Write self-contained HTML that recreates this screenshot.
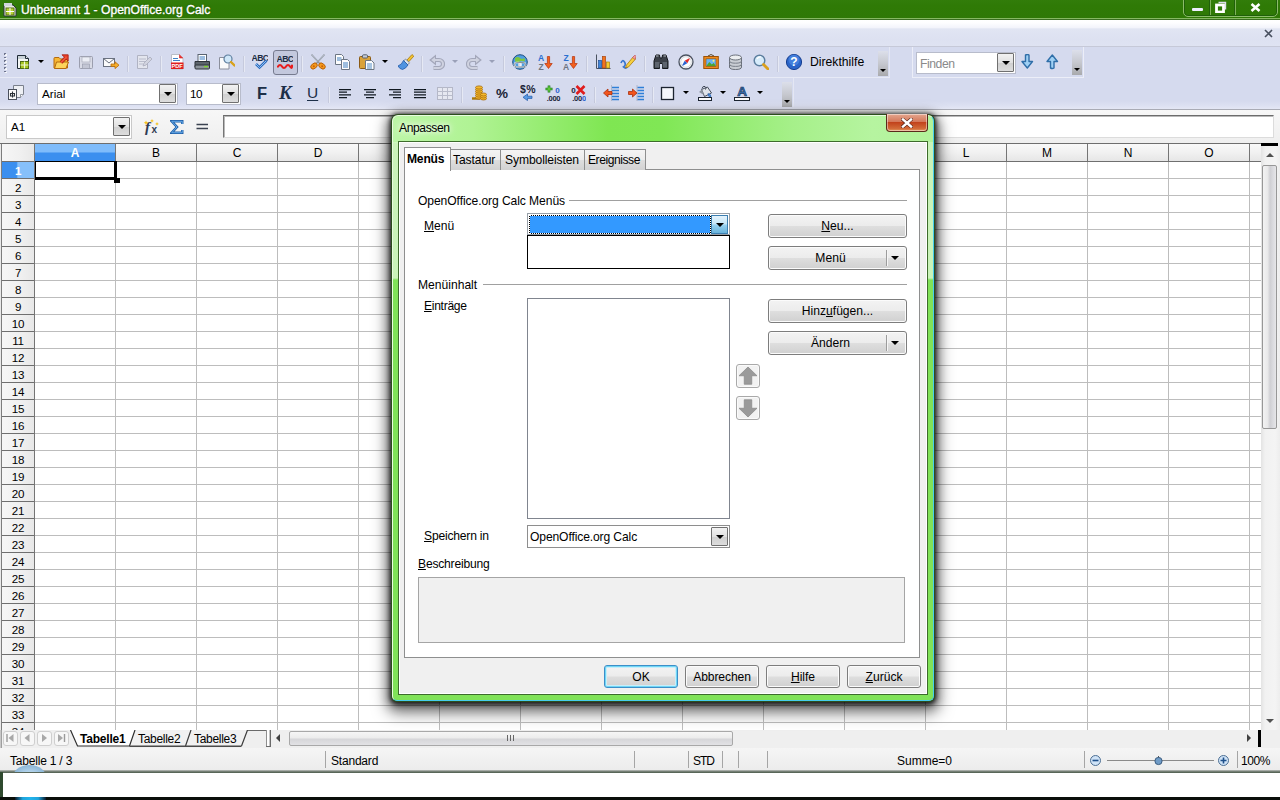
<!DOCTYPE html>
<html lang="de">
<head>
<meta charset="utf-8">
<title>Unbenannt 1 - OpenOffice.org Calc</title>
<style>
*{box-sizing:border-box;margin:0;padding:0}
html,body{width:1280px;height:800px;overflow:hidden;background:#fff}
body{position:relative;font-family:"Liberation Sans",sans-serif;font-size:12px;color:#000;line-height:1}
.a{position:absolute}
.t{position:absolute;white-space:nowrap;line-height:14px;height:14px}
u{text-decoration:underline;text-underline-offset:1px}
/* main window */
#title{left:0;top:0;width:1280px;height:20px;background:linear-gradient(#327d0a,#2f7a06 30%,#2e7805)}
#title .t{color:#fff;font-size:12.1px;left:21px;top:3px;-webkit-text-stroke:.35px #fff;text-shadow:0 0 2px #1c4a08}
#menubar{left:0;top:20px;width:1280px;height:27px;background:linear-gradient(#fff 0,#fdfdff 3px,#f3f4fb 7.500px,#e1e5f3 9px,#dde1f1 19px,#dfe3f2 26px)}
#tb1{left:0;top:47px;width:1280px;height:31px;background:#d5daee}
#tb2{left:0;top:78px;width:1280px;height:32px;background:linear-gradient(#d5daee 0,#d5daee 23px,#dde1f2 28px,#e4e7f5 31px)}
#fbar{left:0;top:110px;width:1280px;height:33px;background:linear-gradient(#f7f7f7,#efefef)}
.sep{position:absolute;width:1px;height:16px;background:#c6cadd}
.combo{position:absolute;background:#fff;border:1px solid #b8bccb}
.cbtn{position:absolute;width:17px;height:19px;background:linear-gradient(#f2f2f2,#e1e1e1 50%,#cfcfcf 51%,#ddd);border:1px solid #707070;border-radius:1px}
.cbtn:after{content:"";position:absolute;left:4px;top:7px;border:4px solid transparent;border-top:4px solid #000;border-bottom:0}
.ovf{position:absolute;width:10px;background:linear-gradient(#dcdfea,#c6c8cf 50%,#a9aaad)}
.ovf:after{content:"";position:absolute;left:2px;bottom:4px;border:3px solid transparent;border-top:3px solid #000;border-bottom:0}
.dd{position:absolute;border:3px solid transparent;border-top:3px solid #000;border-bottom:0;width:0;height:0}
.ch{top:3px;width:80px;text-align:center;font-size:12px}
.rh{left:2px;width:32px;text-align:center;font-size:11.6px;letter-spacing:-0.2px;margin-top:1px}
</style>
</head>
<body>
<!-- ===== main window title bar ===== -->
<div id="title" class="a">
  <svg class="a" style="left:3px;top:2px" width="15" height="15" viewBox="0 0 15 15"><path d="M1 3h9l3 3v8H1z" fill="#e8ece0" stroke="#2a3340"/><rect x="3" y="6" width="8" height="7" fill="#b6d332" stroke="#55701a"/><path d="M3 9.5h8M7 6v7" stroke="#fff"/><path d="M1 1h8v3H1z" fill="#cfd6dc"/></svg>
  <span class="t">Unbenannt 1 - OpenOffice.org Calc</span>
  <div class="a" style="left:1183px;top:-5px;width:95px;height:22px;border:1px solid #8cbc6a;border-radius:5px;box-shadow:inset 0 0 0 1px #20600a"></div>
  <div class="a" style="left:1209px;top:0;width:2px;height:15px;background:linear-gradient(90deg,#20600a 50%,#7fb25c 50%)"></div>
  <div class="a" style="left:1234px;top:0;width:2px;height:15px;background:linear-gradient(90deg,#20600a 50%,#7fb25c 50%)"></div>
  <div class="a" style="left:1192px;top:8px;width:11px;height:3px;background:#eef;border-radius:1px"></div>
  <svg class="a" style="left:1215px;top:1px" width="12" height="12" viewBox="0 0 12 12"><path d="M3.5 1.5h7v7" fill="none" stroke="#dde" stroke-width="1.4"/><rect x="1.500" y="4" width="7" height="7" fill="none" stroke="#fff" stroke-width="2.800"/></svg>
  <svg class="a" style="left:1250px;top:3px" width="11" height="9" viewBox="0 0 11 9"><path d="M1.5 1l8 7M9.5 1l-8 7" stroke="#fff" stroke-width="2.6"/></svg>
</div>
<div class="a" style="left:0;top:18px;width:1280px;height:1px;background:#86b862"></div>
<div class="a" style="left:0;top:19px;width:1280px;height:1px;background:#3b6f22"></div>
<!-- ===== menu bar (empty) ===== -->
<div id="menubar" class="a">
  <svg class="a" style="left:1264px;top:9px" width="9" height="9" viewBox="0 0 9 9"><path d="M1 1l7 7M8 1l-7 7" stroke="#48505f" stroke-width="1.6"/></svg>
</div>
<div class="a" style="left:0;top:46px;width:1280px;height:1px;background:#c6c9d8"></div>
<!-- ===== toolbars ===== -->
<div id="tb1" class="a">
  <div class="a" style="left:4px;top:6px;width:2px;height:19px;background:repeating-linear-gradient(#6d738c 0 1.500px,transparent 1.500px 3.600px)"></div><div class="a" style="left:5px;top:7px;width:2px;height:19px;background:repeating-linear-gradient(rgba(255,255,255,.8) 0 1.500px,transparent 1.500px 3.600px)"></div>
  <svg class="a" style="left:15px;top:7px" width="16" height="16" viewBox="0 0 16 16"><path d="M2.500 1.500h8l3 3v10h-11z" fill="#f4f6f4" stroke="#1f2a36"/><path d="M3 2h7v3H3z" fill="#c9d2d8"/><path d="M10.500 1.500v3h3" fill="#dfe5e8" stroke="#1f2a36"/><rect x="5.500" y="7.500" width="8" height="7" fill="#a7c520" stroke="#4f6d10"/><path d="M5.500 11h8M9.500 7.500v7" stroke="#f2f7d8" stroke-width="1.200"/></svg>
  <div class="dd" style="left:38px;top:13px;border-top-color:#000"></div>
  <svg class="a" style="left:53px;top:7px" width="16" height="16" viewBox="0 0 16 16"><path d="M1 4.500q0-1 1-1h4l1.500 1.500h6q1 0 1 1v8h-13.500z" fill="#f7b733" stroke="#b4690e"/><path d="M1.500 14.500l2-6.500h12l-2.500 6.500z" fill="#fdd45c" stroke="#b4690e"/><path d="M8 8.500l5.500-5.500" fill="none" stroke="#a81c0c" stroke-width="3.400"/><path d="M9 .8h6.200v6.200z" fill="#e8402a" stroke="#a81c0c" stroke-width=".8"/><path d="M8 8.500l5.500-5.500" fill="none" stroke="#f0563a" stroke-width="1.800"/></svg>
  <svg class="a" style="left:78px;top:7px" width="16" height="16" viewBox="0 0 16 16"><rect x="1.500" y="2.500" width="13" height="12" rx="1" fill="#d9dbe6" stroke="#9b9eae"/><rect x="4" y="3" width="8" height="5" fill="#eceef5" stroke="#a8abb9" stroke-width=".7"/><rect x="4.500" y="10" width="7" height="4.500" fill="#c3c6d4" stroke="#9b9eae" stroke-width=".7"/></svg>
  <svg class="a" style="left:103px;top:7px" width="16" height="16" viewBox="0 0 16 16"><rect x=".5" y="4.500" width="11" height="8" fill="#fbfbfb" stroke="#6b7280"/><path d="M.5 4.500l5.500 4.500 5.500-4.500" fill="none" stroke="#6b7280"/><path d="M8 10h4v-2.200l4 3.400-4 3.400v-2.200h-4z" fill="#f8b02c" stroke="#b86a08" stroke-width=".8"/></svg>
  <div class="sep" style="left:127px;top:9px"></div><div class="sep" style="left:128px;top:9px;background:#e6e9f4"></div>
  <svg class="a" style="left:136px;top:7px" width="16" height="16" viewBox="0 0 16 16"><path d="M1.500 1.500h10v13h-10z" fill="#e3e5ee" stroke="#b0b3c3"/><path d="M3 5h7M3 7.500h7M3 10h4" stroke="#b9bccb"/><path d="M7 12l1-3 6-6 2 2-6 6z" fill="#d2d4e0" stroke="#a9acbc" stroke-width=".8"/></svg>
  <div class="sep" style="left:160px;top:9px"></div><div class="sep" style="left:161px;top:9px;background:#e6e9f4"></div>
  <svg class="a" style="left:170px;top:7px" width="16" height="16" viewBox="0 0 16 16"><path d="M1.500 .5h8l3.500 3.500v11h-11.500z" fill="#fff" stroke="#b9bdc7"/><path d="M9.500 .5v3.500h3.500" fill="#e33" stroke="#c22" stroke-width=".6"/><path d="M3 4.500h5M3 6.500h7" stroke="#3f82c8" stroke-width="1.200"/><rect x="1" y="8.500" width="12.500" height="6.500" fill="#e01e1e"/><text x="7.200" y="14" font-size="5.600" font-weight="bold" fill="#fff" text-anchor="middle" font-family="Liberation Sans, sans-serif">PDF</text></svg>
  <svg class="a" style="left:194px;top:7px" width="16" height="16" viewBox="0 0 16 16"><rect x="4" y=".5" width="8.500" height="7" fill="#fff" stroke="#5a6472"/><path d="M5.500 3h5.500M5.500 5h5.500" stroke="#3d7fc4" stroke-width="1.100"/><path d="M1 7.500h14.500v5.500h-14.500z" fill="#5d646c" stroke="#2d3238"/><rect x="1" y="11" width="14.500" height="4" rx="1" fill="#8b9299" stroke="#2d3238"/><rect x="10" y="11.800" width="4" height="1.500" fill="#7fd12f"/></svg>
  <svg class="a" style="left:219px;top:7px" width="16" height="16" viewBox="0 0 16 16"><path d="M.5 3.500h7l2.500 2.500v9h-9.500z" fill="#fbfbfb" stroke="#8b8f9c"/><circle cx="9" cy="5" r="4" fill="#cfe7f9" stroke="#5f7f9f" stroke-width="1.200"/><path d="M12 8l3.500 3.500" stroke="#d9a21c" stroke-width="2.400" stroke-linecap="round"/></svg>
  <div class="sep" style="left:243px;top:9px"></div><div class="sep" style="left:244px;top:9px;background:#e6e9f4"></div>
  <svg class="a" style="left:252px;top:7px" width="16" height="16" viewBox="0 0 16 16"><text x="8" y="6.500" font-size="8.600" font-weight="bold" fill="#1a2b44" text-anchor="middle" letter-spacing="-.5" font-family="Liberation Sans, sans-serif">ABC</text><path d="M4 10l3.500 3.500 7-7" fill="none" stroke="#2a6cc0" stroke-width="2.600"/><path d="M4 10l3.500 3.500 7-7" fill="none" stroke="#9cc6f2" stroke-width=".9"/></svg>
  <div class="a" style="left:273px;top:3px;width:25px;height:25px;border:1px solid #767b8f;border-radius:3px;background:#c3c8dd"></div>
  <svg class="a" style="left:277px;top:7px" width="16" height="16" viewBox="0 0 16 16"><text x="8" y="8" font-size="8.600" font-weight="bold" fill="#1a2b44" text-anchor="middle" letter-spacing="-.5" font-family="Liberation Sans, sans-serif">ABC</text><path d="M1 12.500q2-3 4 0t4 0 4 0 2-1" fill="none" stroke="#e81c1c" stroke-width="2.200" stroke-linecap="round"/></svg>
  <div class="sep" style="left:301px;top:9px"></div><div class="sep" style="left:302px;top:9px;background:#e6e9f4"></div>
  <svg class="a" style="left:310px;top:7px" width="16" height="16" viewBox="0 0 16 16"><path d="M1.500 .5l10 11M14.500 .5l-10 11" stroke="#8d95a2" stroke-width="1.500"/><path d="M1.500 .5l6 6.800M14.500 .5l-6 6.800" stroke="#c9ced6" stroke-width=".7"/><ellipse cx="4" cy="12" rx="3.600" ry="2.500" transform="rotate(-38 4 12)" fill="#f59a1c" stroke="#b8600a" stroke-width=".9"/><ellipse cx="12" cy="12" rx="3.600" ry="2.500" transform="rotate(38 12 12)" fill="#f59a1c" stroke="#b8600a" stroke-width=".9"/><circle cx="3.800" cy="12.300" r="1" fill="#c8600c"/><circle cx="12.200" cy="12.300" r="1" fill="#c8600c"/></svg>
  <svg class="a" style="left:335px;top:7px" width="16" height="16" viewBox="0 0 16 16"><path d="M.5 .5h6l2 2v8h-8z" fill="#fdfdfd" stroke="#6c7684"/><path d="M2 4h4.500M2 6h4.500" stroke="#3f7fc0"/><path d="M6.500 5.500h6l2 2v8h-8z" fill="#fdfdfd" stroke="#6c7684"/><path d="M8 9h5M8 11h5M8 13h5" stroke="#3f7fc0"/></svg>
  <svg class="a" style="left:359px;top:7px" width="16" height="16" viewBox="0 0 16 16"><rect x=".5" y="2.500" width="11" height="12" rx="1" fill="#d9a23a" stroke="#8b5a14"/><rect x="3.500" y=".8" width="5" height="3.200" rx="1" fill="#c8ccd2" stroke="#596170"/><path d="M6.500 6.500h6l2.500 2.500v6.500h-8.500z" fill="#fdfdfd" stroke="#6c7684"/><path d="M8 10h5M8 12h5M8 14h5" stroke="#3f7fc0" stroke-width=".9"/></svg>
  <div class="dd" style="left:382px;top:13px;border-top-color:#000"></div>
  <svg class="a" style="left:398px;top:7px" width="16" height="16" viewBox="0 0 16 16"><path d="M9 6l5-5.500 1.800 1.700-5 5.500z" fill="#f2c230" stroke="#a9780c" stroke-width=".8"/><path d="M7.500 5l4 3.800-1.800 2-4-3.800z" fill="#dfe4ea" stroke="#6c7684" stroke-width=".8"/><path d="M5.500 6.500l4.500 4.500q-2 3.500-5.500 4.500-3-.5-4.500-3.500 4-1.500 5.500-5.500z" fill="#4f93e0" stroke="#1f58a8" stroke-width=".8"/></svg>
  <div class="sep" style="left:421px;top:9px"></div><div class="sep" style="left:422px;top:9px;background:#e6e9f4"></div>
  <svg class="a" style="left:429px;top:7px" width="16" height="16" viewBox="0 0 16 16"><path d="M5 6h5a4 4 0 010 8h-5.500" fill="none" stroke="#a3a7ba" stroke-width="4.200"/><path d="M7 .5v11l-6.800-5.500z" fill="#a3a7ba"/><path d="M5 6h5a4 4 0 010 8h-5.500" fill="none" stroke="#cfd2e0" stroke-width="2"/><path d="M6 3v6l-3.800-3z" fill="#cfd2e0"/></svg>
  <div class="dd" style="left:452px;top:13px;border-top-color:#9aa0b8"></div>
  <svg class="a" style="left:466px;top:7px" width="16" height="16" viewBox="0 0 16 16"><path d="M11 6h-5a4 4 0 000 8h5.500" fill="none" stroke="#a3a7ba" stroke-width="4.200"/><path d="M9 .5v11l6.800-5.500z" fill="#a3a7ba"/><path d="M11 6h-5a4 4 0 000 8h5.500" fill="none" stroke="#cfd2e0" stroke-width="2"/><path d="M10 3v6l3.800-3z" fill="#cfd2e0"/></svg>
  <div class="dd" style="left:489px;top:13px;border-top-color:#9aa0b8"></div>
  <div class="sep" style="left:503px;top:9px"></div><div class="sep" style="left:504px;top:9px;background:#e6e9f4"></div>
  <svg class="a" style="left:512px;top:7px" width="16" height="16" viewBox="0 0 16 16"><circle cx="8" cy="8" r="7.300" fill="#4f9fe0" stroke="#1f4f80"/><path d="M3 4q3-2 5 0t4 0q2 2 0 3.500-3-1-5 .5t-4-1z" fill="#7fc63f"/><rect x="2.500" y="8.500" width="6.500" height="4.500" rx="2.200" fill="none" stroke="#f4f6f8" stroke-width="1.700"/><rect x="7" y="8.500" width="6.500" height="4.500" rx="2.200" fill="none" stroke="#dfe3e8" stroke-width="1.700"/><rect x="2.500" y="8.500" width="11" height="4.500" rx="2.200" fill="none" stroke="#39424d" stroke-width=".5"/></svg>
  <svg class="a" style="left:537px;top:7px" width="16" height="16" viewBox="0 0 16 16"><text x="4" y="7" font-size="8.500" font-weight="bold" fill="#2a6fd0" text-anchor="middle" font-family="Liberation Sans, sans-serif">A</text><text x="4" y="15.500" font-size="8.500" font-weight="bold" fill="#6d7480" text-anchor="middle" font-family="Liberation Sans, sans-serif">Z</text><path d="M10.400 2.500h2.200v7h2.600l-3.700 5-3.700-5h2.600z" fill="#f4601c" stroke="#b5300c" stroke-width=".7"/></svg>
  <svg class="a" style="left:562px;top:7px" width="16" height="16" viewBox="0 0 16 16"><text x="4" y="7" font-size="8.500" font-weight="bold" fill="#2a6fd0" text-anchor="middle" font-family="Liberation Sans, sans-serif">Z</text><text x="4" y="15.500" font-size="8.500" font-weight="bold" fill="#6d7480" text-anchor="middle" font-family="Liberation Sans, sans-serif">A</text><path d="M10.400 2.500h2.200v7h2.600l-3.700 5-3.700-5h2.600z" fill="#f4601c" stroke="#b5300c" stroke-width=".7"/></svg>
  <div class="sep" style="left:586px;top:9px"></div><div class="sep" style="left:587px;top:9px;background:#e6e9f4"></div>
  <svg class="a" style="left:595px;top:7px" width="16" height="16" viewBox="0 0 16 16"><path d="M1.500 .5v14h14" fill="none" stroke="#4a5260"/><rect x="3.500" y="6.500" width="3" height="7.500" fill="#3f86d8" stroke="#1f4f98" stroke-width=".7"/><rect x="7.500" y="2.500" width="3" height="11.500" fill="#f2731c" stroke="#a9440c" stroke-width=".7"/><rect x="11.500" y="8" width="3" height="6" fill="#f8cc30" stroke="#a9840c" stroke-width=".7"/></svg>
  <svg class="a" style="left:620px;top:7px" width="16" height="16" viewBox="0 0 16 16"><path d="M1 9q1.500-4 3.500-1t-1 5q2 2 4 0" fill="none" stroke="#3a76d0" stroke-width="1.700"/><path d="M6.500 11l7-8.500 2.500 2-7.500 8.500-3 .8z" fill="#f6d040" stroke="#a9780c" stroke-width=".8"/><path d="M12.500 3.500l2.500-2.500 1 1.500-1 3z" fill="#f29aa2" stroke="#b55" stroke-width=".6"/></svg>
  <div class="sep" style="left:644px;top:9px"></div><div class="sep" style="left:645px;top:9px;background:#e6e9f4"></div>
  <svg class="a" style="left:653px;top:7px" width="16" height="16" viewBox="0 0 16 16"><path d="M1 7l2-6h3.500l.5 3h2l.5-3h3.500l2 6v7.500h-5.500v-5h-3v5h-5.500z" fill="#3b4048" stroke="#15181d"/><path d="M2 8h4.500v5.500h-4.500zM9.500 8h4.500v5.500h-4.500z" fill="#5d646e"/><path d="M3 2h2.500M10.500 2h2.500" stroke="#8a9098" stroke-width="1.400"/></svg>
  <svg class="a" style="left:678px;top:7px" width="16" height="16" viewBox="0 0 16 16"><circle cx="8" cy="8" r="7" fill="#fdfdfd" stroke="#4a5260" stroke-width="1.300"/><path d="M12.500 3.500l-3.200 5.800-2.600-2.600z" fill="#e02a2a"/><path d="M3.500 12.500l3.200-5.800 2.600 2.600z" fill="#2a62d0"/><circle cx="8" cy="8" r="5.300" fill="none" stroke="#c5cad2" stroke-width=".7"/></svg>
  <svg class="a" style="left:703px;top:7px" width="16" height="16" viewBox="0 0 16 16"><path d="M5 2l3-1.500 3 1.500" fill="none" stroke="#5b4a2a"/><rect x=".8" y="2.500" width="14.500" height="12" fill="#f08c1c" stroke="#9c5208"/><rect x="3" y="4.800" width="10" height="7.500" fill="#6bb4f0" stroke="#8b4a08" stroke-width=".6"/><path d="M3.300 12l3-4 2.500 2.500 2-1.500 2 3z" fill="#4fa52a"/><circle cx="10.500" cy="6.800" r="1" fill="#fdf07a"/></svg>
  <svg class="a" style="left:728px;top:7px" width="16" height="16" viewBox="0 0 16 16"><path d="M1.500 3.500v9.500q0 2.500 6 2.500t6-2.500v-9.500" fill="#c9cdd3" stroke="#6a707a"/><ellipse cx="7.500" cy="3.500" rx="6" ry="2.500" fill="#eceef0" stroke="#6a707a"/><path d="M1.500 6.800q0 2.400 6 2.400t6-2.400M1.500 10q0 2.400 6 2.400t6-2.400" fill="none" stroke="#7a808a"/></svg>
  <svg class="a" style="left:753px;top:7px" width="16" height="16" viewBox="0 0 16 16"><circle cx="6.500" cy="6.500" r="5.300" fill="#d7ecfb" stroke="#5d7f9f" stroke-width="1.500"/><path d="M4 5q1.500-2.500 4-2" fill="none" stroke="#fff" stroke-width="1.200"/><path d="M10.500 10.500l4.500 4.500" stroke="#dba01c" stroke-width="2.800" stroke-linecap="round"/></svg>
  <div class="sep" style="left:777px;top:9px"></div><div class="sep" style="left:778px;top:9px;background:#e6e9f4"></div>
  <svg class="a" style="left:786px;top:7px" width="16" height="16" viewBox="0 0 16 16"><circle cx="8" cy="8" r="7.600" fill="#2b64c8" stroke="#173f90"/><circle cx="8" cy="6" r="5.500" fill="#4f8ae4" opacity=".7"/><text x="8" y="12.300" font-size="12" font-weight="bold" fill="#fff" text-anchor="middle" font-family="Liberation Sans, sans-serif">?</text></svg>
  <span class="t" style="left:810px;top:8px;font-size:12.2px">Direkthilfe</span>
  <div class="ovf" style="left:878px;top:4px;height:25px"></div>
  <div class="a" style="left:889px;top:0;width:1px;height:31px;background:#e4e7f4"></div>
  <!-- find toolbar -->
  <div class="a" style="left:912px;top:0;width:172px;height:31px;border:1px solid #eceef8;border-top:0"></div>
  <div class="combo" style="left:916px;top:5px;width:100px;height:22px"><span class="t" style="left:3px;top:4px;color:#8a8a8a;font-size:12.2px;letter-spacing:-0.45px">Finden</span><div class="cbtn" style="left:80px;top:0px"></div></div>
  <svg class="a" style="left:1020px;top:7px" width="16" height="16" viewBox="0 0 16 16"><path d="M5.500 1q2-1 3.500 0v6.500h3.500l-5.200 6.500-5.300-6.500h3.500z" fill="#9fd0f4" stroke="#2f6ea8" stroke-width="1.400" stroke-linejoin="round"/></svg>
  <svg class="a" style="left:1045px;top:7px" width="16" height="16" viewBox="0 0 16 16"><path d="M5.500 14q2 1 3.500 0v-6.500h3.500l-5.200-6.500-5.300 6.500h3.500z" fill="#9fd0f4" stroke="#2f6ea8" stroke-width="1.400" stroke-linejoin="round"/></svg>
  <div class="ovf" style="left:1072px;top:3px;height:25px"></div>
</div>
<div class="a" style="left:0;top:77px;width:890px;height:1px;background:#e7eaf6"></div>
<div id="tb2" class="a">
  <div class="combo" style="left:37px;top:5px;width:141px;height:22px"><span class="t" style="left:4px;top:3px;font-size:11.7px">Arial</span><div class="cbtn" style="left:121px;top:0px"></div></div>
  <div class="combo" style="left:186px;top:5px;width:55px;height:22px"><span class="t" style="left:3px;top:3px;font-size:11.7px;letter-spacing:-0.6px">10</span><div class="cbtn" style="left:35px;top:0px"></div></div>
  <svg class="a" style="left:8px;top:7px" width="16" height="16" viewBox="0 0 16 16"><path d="M5.500 .5h10v9l-3 3h-7z" fill="#eef0f4" stroke="#7a808c"/><path d="M12.500 12.500v-3h3" fill="#fff" stroke="#7a808c" stroke-width=".8"/><rect x=".5" y="4.500" width="8" height="10" fill="#fafafa" stroke="#4a505c"/><path d="M4.500 6.500v6M2.500 8.500h4v2.500h-4z" fill="none" stroke="#2a3038" stroke-width="1.100"/></svg>
  <span class="t" style="left:257px;top:6px;height:18px;line-height:18px;font-size:16.500px;font-weight:bold;color:#1c2f48">F</span>
  <span class="t" style="left:279px;top:5px;height:20px;line-height:20px;font-size:19px;font-weight:bold;font-style:italic;color:#1c2f48;font-family:'Liberation Serif',serif">K</span>
  <span class="t" style="left:307px;top:6px;height:18px;line-height:18px;font-size:15.500px;color:#1c2f48;text-decoration:underline;text-underline-offset:2px">U</span>
  <div class="sep" style="left:328px;top:9px"></div><div class="sep" style="left:329px;top:9px;background:#e6e9f4"></div>
  <svg class="a" style="left:337px;top:7px" width="16" height="16" viewBox="0 0 16 16"><path d="M2 4.500h12M2 7.200h8M2 9.900h12M2 12.600h8" stroke="#101820" stroke-width="1.250"/></svg>
  <svg class="a" style="left:362px;top:7px" width="16" height="16" viewBox="0 0 16 16"><path d="M2 4.500h12M4 7.200h8M2 9.900h12M4 12.600h8" stroke="#101820" stroke-width="1.250"/></svg>
  <svg class="a" style="left:387px;top:7px" width="16" height="16" viewBox="0 0 16 16"><path d="M2 4.500h12M6 7.200h8M2 9.900h12M6 12.600h8" stroke="#101820" stroke-width="1.250"/></svg>
  <svg class="a" style="left:412px;top:7px" width="16" height="16" viewBox="0 0 16 16"><path d="M2 4.500h12M2 7.200h12M2 9.900h12M2 12.600h12" stroke="#101820" stroke-width="1.250"/></svg>
  <svg class="a" style="left:437px;top:7px" width="16" height="16" viewBox="0 0 16 16"><rect x=".5" y="2.500" width="15" height="12" fill="#e6e8f1" stroke="#b4b7c7"/><path d="M.5 6.500h15M.5 10.500h15M5.500 2.500v12M10.500 2.500v12" stroke="#b9bccb"/></svg>
  <div class="sep" style="left:461px;top:9px"></div><div class="sep" style="left:462px;top:9px;background:#e6e9f4"></div>
  <svg class="a" style="left:471px;top:7px" width="16" height="16" viewBox="0 0 16 16"><path d="M1 13.500h8" stroke="#a9780c" stroke-width="2.400"/><g fill="#f4b92c" stroke="#a86a08" stroke-width=".8"><ellipse cx="8" cy="12.500" rx="3.500" ry="1.600"/><ellipse cx="8" cy="10.500" rx="3.500" ry="1.600"/><ellipse cx="8" cy="8.500" rx="3.500" ry="1.600"/><ellipse cx="8" cy="6.500" rx="3.500" ry="1.600"/><ellipse cx="8" cy="4.500" rx="3.500" ry="1.600"/><ellipse cx="8" cy="2.500" rx="3.500" ry="1.600"/><ellipse cx="12.500" cy="13.500" rx="3" ry="1.500"/><ellipse cx="12.500" cy="11.500" rx="3" ry="1.500"/><ellipse cx="12.500" cy="9.500" rx="3" ry="1.500"/></g></svg>
  <svg class="a" style="left:494px;top:7px" width="16" height="16" viewBox="0 0 16 16"><text x="8" y="12.800" font-size="13.500" font-weight="bold" fill="#1a2436" text-anchor="middle" font-family="Liberation Sans, sans-serif">%</text></svg>
  <svg class="a" style="left:520px;top:7px" width="16" height="16" viewBox="0 0 16 16"><text x="8" y="8" font-size="10.500" font-weight="bold" fill="#1a2436" text-anchor="middle" letter-spacing=".3" font-family="Liberation Sans, sans-serif">$%</text><path d="M12 11.200h-4.500v-2.200l-4.500 3.300 4.500 3.300v-2.200h4.500z" fill="#5a9be4" stroke="#1f58a8" stroke-width=".7"/></svg>
  <svg class="a" style="left:545px;top:7px" width="16" height="16" viewBox="0 0 16 16"><path d="M4 .5v7M.5 4h7" stroke="#1f7a1f" stroke-width="2.600"/><path d="M4 1.200v5.600M1.200 4h5.600" stroke="#6fdc3f" stroke-width="1.200"/><text x="12.500" y="8" font-size="8" font-weight="bold" fill="#2a62d0" text-anchor="middle" font-family="Liberation Sans, sans-serif">0</text><text x="8.500" y="15.500" font-size="7.500" font-weight="bold" fill="#1a2436" text-anchor="middle" letter-spacing="-.3" font-family="Liberation Sans, sans-serif">.000</text></svg>
  <svg class="a" style="left:570px;top:7px" width="16" height="16" viewBox="0 0 16 16"><text x="3.500" y="8" font-size="8" font-weight="bold" fill="#1a2436" text-anchor="middle" font-family="Liberation Sans, sans-serif">0</text><path d="M6.500 1l8 8M14.500 1l-8 8" stroke="#e01c1c" stroke-width="2.600"/><text x="7" y="15.500" font-size="7.500" font-weight="bold" fill="#1a2436" text-anchor="middle" letter-spacing="-.3" font-family="Liberation Sans, sans-serif">.00</text><text x="14" y="15.500" font-size="7.500" font-weight="bold" fill="#2a62d0" text-anchor="middle" font-family="Liberation Sans, sans-serif">0</text></svg>
  <div class="sep" style="left:594px;top:9px"></div><div class="sep" style="left:595px;top:9px;background:#e6e9f4"></div>
  <svg class="a" style="left:603px;top:7px" width="16" height="16" viewBox="0 0 16 16"><path d="M9 2.500h7M9 5.500h7M9 8.500h7M9 11.500h7M9 14.500h7" stroke="#2f7fd8" stroke-width="1.300"/><path d="M8.500 .5v15" stroke="#7a8290" stroke-width=".8" stroke-dasharray="1 1"/><path d="M.5 8l4.500-4v2.500h4v3h-4v2.500z" fill="#f2541c" stroke="#a9300c" stroke-width=".8"/></svg>
  <svg class="a" style="left:628px;top:7px" width="16" height="16" viewBox="0 0 16 16"><path d="M9.500 2.500h6.500M9.500 5.500h6.500M9.500 8.500h6.500M9.500 11.500h6.500M9.500 14.500h6.500" stroke="#2f7fd8" stroke-width="1.300"/><path d="M9 .5v15" stroke="#7a8290" stroke-width=".8" stroke-dasharray="1 1"/><path d="M9 8l-4.500-4v2.500h-4v3h4v2.500z" fill="#f2541c" stroke="#a9300c" stroke-width=".8"/></svg>
  <div class="sep" style="left:652px;top:9px"></div><div class="sep" style="left:653px;top:9px;background:#e6e9f4"></div>
  <svg class="a" style="left:660px;top:7px" width="16" height="16" viewBox="0 0 16 16"><rect x="1.500" y="2.500" width="12" height="12" fill="#f4f6fb" stroke="#1c2430" stroke-width="1.300"/></svg>
  <div class="dd" style="left:683px;top:13px;border-top-color:#000"></div>
  <svg class="a" style="left:697px;top:7px" width="16" height="16" viewBox="0 0 16 16"><path d="M4.500 4.500l6-2.500 4 6-7 3.500z" fill="#dfe3ea" stroke="#3a4250" stroke-width=".9"/><path d="M5 3.500q1-3 3-2t.5 3" fill="none" stroke="#3a4250"/><path d="M11 8.500q3 .5 3 3-1.500 1-2.500-.5z" fill="#4f93e0" stroke="#1f58a8" stroke-width=".6"/><path d="M2 7l3-2.500 2 5.500z" fill="#8b939f"/><rect x="1.500" y="12.500" width="13" height="3" fill="#fcfcfc" stroke="#1c2430"/></svg>
  <div class="dd" style="left:720px;top:13px;border-top-color:#000"></div>
  <svg class="a" style="left:734px;top:7px" width="16" height="16" viewBox="0 0 16 16"><text x="8" y="11" font-size="13.500" font-weight="bold" fill="#3f78b8" stroke="#16365e" stroke-width=".7" text-anchor="middle" font-family="Liberation Sans, sans-serif">A</text><rect x=".5" y="12.500" width="15" height="3" fill="#fcfcfc" stroke="#1c2430"/></svg>
  <div class="dd" style="left:757px;top:13px;border-top-color:#000"></div>
  <div class="ovf" style="left:782px;top:4px;height:25px"></div>
  <div class="a" style="left:793px;top:0;width:1px;height:31px;background:#e4e7f4"></div>
</div>
<div class="a" style="left:0;top:109px;width:1280px;height:1px;background:#a9abb5"></div>
<!-- ===== formula bar ===== -->
<div id="fbar" class="a">
  <div class="combo" style="left:6px;top:5px;width:126px;height:24px;border-color:#c9c9c9"><span class="t" style="left:4px;top:4px;font-size:11.6px">A1</span><div class="cbtn" style="left:106px;top:1px;height:19px"></div></div>
  <svg class="a" style="left:143px;top:9px" width="16" height="16" viewBox="0 0 16 16"><text x="2" y="13" font-size="15" font-style="italic" font-weight="bold" fill="#2f3b52" font-family="Liberation Serif, serif">f</text><text x="8.500" y="14" font-size="10" font-weight="bold" fill="#2f3b52" font-family="Liberation Sans, sans-serif">x</text><path d="M3 1.500l.7 1.500 1.500.7-1.500.7-.7 1.500-.7-1.500-1.500-.7 1.500-.7zM9 0l.6 1.300 1.300.6-1.300.6-.6 1.300-.6-1.300-1.300-.6 1.300-.6zM14 3l.6 1.300 1.300.6-1.300.6-.6 1.300-.6-1.300-1.300-.6 1.300-.6z" fill="#f4c21c"/></svg>
  <svg class="a" style="left:170px;top:10px" width="14" height="14" viewBox="0 0 16 16"><path d="M14 4.500v-3h-12l6 6.500-6 6.500h12v-3" fill="none" stroke="#1f5fa8" stroke-width="2.800" stroke-linejoin="miter"/><path d="M14 4.500v-3h-12l6 6.500-6 6.500h12v-3" fill="none" stroke="#6fb4f0" stroke-width="1"/></svg>
  <svg class="a" style="left:195px;top:9px" width="16" height="16" viewBox="0 0 16 16"><path d="M1.500 5.500h11.500M1.500 9.500h11.500" stroke="#3a4250" stroke-width="1.700"/></svg>
  <div class="a" style="left:223px;top:5px;width:1051px;height:23px;background:#fff;border:1px solid #dcdcdc;border-top:1px solid #6c6c6c;border-left:1px solid #767676;box-shadow:inset 1px 1px 0 #b9b9b9"></div>
</div>
<!-- ===== spreadsheet grid ===== -->
<div id="grid" class="a" style="left:0;top:143px;width:1261px;height:587px;background:#fff;overflow:hidden">
<div class="a" style="left:35px;top:19px;width:1226px;height:568px;background:repeating-linear-gradient(90deg,transparent 0 80px,#bdbdbd 80px 81px),repeating-linear-gradient(180deg,transparent 0 16px,#bdbdbd 16px 17px)"></div>
<div class="a" style="left:0;top:0;width:1261px;height:19px;background:linear-gradient(#f9f9f9,#f1f1f1 50%,#e6e6e6);border-top:1px solid #6e6e6e;border-bottom:1px solid #6f6f6f"></div>
<div class="a" style="left:35px;top:1px;width:80px;height:17px;background:linear-gradient(#7fbcfb 0 48%,#3b8fef 52% 100%)"></div>
<span class="t ch" style="left:35px;color:#fff;font-weight:bold">A</span>
<div class="a" style="left:115px;top:1px;width:1px;height:17px;background:#757575"></div>
<span class="t ch" style="left:116px">B</span>
<div class="a" style="left:196px;top:1px;width:1px;height:17px;background:#757575"></div>
<span class="t ch" style="left:197px">C</span>
<div class="a" style="left:277px;top:1px;width:1px;height:17px;background:#757575"></div>
<span class="t ch" style="left:278px">D</span>
<div class="a" style="left:358px;top:1px;width:1px;height:17px;background:#757575"></div>
<span class="t ch" style="left:359px">E</span>
<div class="a" style="left:439px;top:1px;width:1px;height:17px;background:#757575"></div>
<span class="t ch" style="left:440px">F</span>
<div class="a" style="left:520px;top:1px;width:1px;height:17px;background:#757575"></div>
<span class="t ch" style="left:521px">G</span>
<div class="a" style="left:601px;top:1px;width:1px;height:17px;background:#757575"></div>
<span class="t ch" style="left:602px">H</span>
<div class="a" style="left:682px;top:1px;width:1px;height:17px;background:#757575"></div>
<span class="t ch" style="left:683px">I</span>
<div class="a" style="left:763px;top:1px;width:1px;height:17px;background:#757575"></div>
<span class="t ch" style="left:764px">J</span>
<div class="a" style="left:844px;top:1px;width:1px;height:17px;background:#757575"></div>
<span class="t ch" style="left:845px">K</span>
<div class="a" style="left:925px;top:1px;width:1px;height:17px;background:#757575"></div>
<span class="t ch" style="left:926px">L</span>
<div class="a" style="left:1006px;top:1px;width:1px;height:17px;background:#757575"></div>
<span class="t ch" style="left:1007px">M</span>
<div class="a" style="left:1087px;top:1px;width:1px;height:17px;background:#757575"></div>
<span class="t ch" style="left:1088px">N</span>
<div class="a" style="left:1168px;top:1px;width:1px;height:17px;background:#757575"></div>
<span class="t ch" style="left:1169px">O</span>
<div class="a" style="left:1249px;top:1px;width:1px;height:17px;background:#757575"></div>
<div class="a" style="left:0;top:1px;width:35px;height:586px;background:linear-gradient(90deg,#e9e9e9 0 1px,#7d7d7d 1px 2px,#f6f6f6 2px,#f0f0f0 20px,#e8e8e8 34px,#757575 34px 35px)"></div>
<div class="a" style="left:2px;top:18px;width:32px;height:569px;background:repeating-linear-gradient(180deg,#6f6f6f 0 1px,transparent 1px 17px)"></div>
<div class="a" style="left:2px;top:19px;width:32px;height:16px;background:linear-gradient(90deg,#3b8fef 0 45%,#86c0fa 50% 100%)"></div>
<span class="t rh" style="top:20px;color:#fff;font-weight:bold">1</span>
<span class="t rh" style="top:37px">2</span>
<span class="t rh" style="top:54px">3</span>
<span class="t rh" style="top:71px">4</span>
<span class="t rh" style="top:88px">5</span>
<span class="t rh" style="top:105px">6</span>
<span class="t rh" style="top:122px">7</span>
<span class="t rh" style="top:139px">8</span>
<span class="t rh" style="top:156px">9</span>
<span class="t rh" style="top:173px">10</span>
<span class="t rh" style="top:190px">11</span>
<span class="t rh" style="top:207px">12</span>
<span class="t rh" style="top:224px">13</span>
<span class="t rh" style="top:241px">14</span>
<span class="t rh" style="top:258px">15</span>
<span class="t rh" style="top:275px">16</span>
<span class="t rh" style="top:292px">17</span>
<span class="t rh" style="top:309px">18</span>
<span class="t rh" style="top:326px">19</span>
<span class="t rh" style="top:343px">20</span>
<span class="t rh" style="top:360px">21</span>
<span class="t rh" style="top:377px">22</span>
<span class="t rh" style="top:394px">23</span>
<span class="t rh" style="top:411px">24</span>
<span class="t rh" style="top:428px">25</span>
<span class="t rh" style="top:445px">26</span>
<span class="t rh" style="top:462px">27</span>
<span class="t rh" style="top:479px">28</span>
<span class="t rh" style="top:496px">29</span>
<span class="t rh" style="top:513px">30</span>
<span class="t rh" style="top:530px">31</span>
<span class="t rh" style="top:547px">32</span>
<span class="t rh" style="top:564px">33</span>
<span class="t rh" style="top:581px">34</span>
<div class="a" style="left:35px;top:18px;width:82px;height:19px;border:2px solid #000;border-top-width:1px;border-left-width:1px;border-bottom-width:3px;border-right-width:3px"></div>
<div class="a" style="left:114px;top:35px;width:6px;height:5px;background:#000"></div>
</div>
<!-- ===== vertical scrollbar ===== -->
<div class="a" style="left:1261px;top:143px;width:19px;height:587px;background:linear-gradient(90deg,#e3e3e3,#f1f1f1 4px,#f4f4f4 14px,#ededed)"></div>
<div class="a" style="left:1261px;top:143px;width:17px;height:3px;background:#000"></div>
<div class="dd" style="left:1266px;top:153px;border-width:0 4px 4px 4px;border-color:transparent transparent #505050 transparent;border-style:solid"></div>
<div class="a" style="left:1262px;top:165px;width:15px;height:264px;border:1px solid #979797;border-radius:2px;background:linear-gradient(90deg,#f3f3f3,#e9e9ea 35%,#cfcfd3 55%,#dcdce0 80%,#e6e6e8)"></div>
<div class="a" style="left:1266px;top:719px;width:0;height:0;border:4px solid transparent;border-top:4px solid #505050;border-bottom:0"></div>
<!-- ===== sheet tabs + horizontal scrollbar ===== -->
<div class="a" style="left:0;top:730px;width:1280px;height:18px;background:#efefef"></div>
<div class="a" style="left:0;top:730px;width:2px;height:18px;background:linear-gradient(90deg,#dcdcdc,#8a8a8a)"></div>
<!--TABNAV--><div class="a" style="left:3px;top:731px;width:15px;height:15px;border:1px solid #cfcfcf;border-radius:3px;background:#f7f7f7"></div><svg class="a" style="left:3px;top:731px" width="15" height="15" viewBox="0 0 15 15"><path d="M4 3v8" stroke="#9a9a9a" stroke-width="1.400"/><path d="M10.500 3v8l-5-4z" fill="#a8a8a8"/></svg>
<div class="a" style="left:20px;top:731px;width:15px;height:15px;border:1px solid #cfcfcf;border-radius:3px;background:#f7f7f7"></div><svg class="a" style="left:20px;top:731px" width="15" height="15" viewBox="0 0 15 15"><path d="M9.500 3v8l-5-4z" fill="#a8a8a8"/></svg>
<div class="a" style="left:37px;top:731px;width:15px;height:15px;border:1px solid #cfcfcf;border-radius:3px;background:#f7f7f7"></div><svg class="a" style="left:37px;top:731px" width="15" height="15" viewBox="0 0 15 15"><path d="M5 3v8l5-4z" fill="#a8a8a8"/></svg>
<div class="a" style="left:54px;top:731px;width:15px;height:15px;border:1px solid #cfcfcf;border-radius:3px;background:#f7f7f7"></div><svg class="a" style="left:54px;top:731px" width="15" height="15" viewBox="0 0 15 15"><path d="M10.500 3v8" stroke="#9a9a9a" stroke-width="1.400"/><path d="M4 3v8l5-4z" fill="#a8a8a8"/></svg><!--/TABNAV-->
<svg class="a" style="left:66px;top:730px" width="210" height="18" viewBox="0 0 210 18">
  <path d="M69 0.500H200.500" fill="none" stroke="#6a6a6a"/>
  <path d="M4.500 0l7 16h52l5.500-16z" fill="#fff"/>
  <path d="M63.500 16h112l6-16h-112.500z" fill="#f1f1f1"/>
  <path d="M4.500 0l7 16h52l5.500-16" fill="none" stroke="#2e2e2e" stroke-width="1.200"/>
  <path d="M125 0l-5.500 16M181.500 0l-6 16" fill="none" stroke="#3c3c3c" stroke-width="1.200"/>
  <path d="M63.500 16.200h112" stroke="#4a4a4a" stroke-width="1.400"/>
</svg>
<span class="t" style="left:80px;top:732px;font-weight:bold;font-size:12px;letter-spacing:-0.2px">Tabelle1</span>
<span class="t" style="left:138px;top:732px;font-size:12px;letter-spacing:-0.3px">Tabelle2</span>
<span class="t" style="left:194px;top:732px;font-size:12px;letter-spacing:-0.3px">Tabelle3</span>
<div class="a" style="left:266px;top:730px;width:5px;height:17px;background:linear-gradient(90deg,#8f8f8f 0 1px,#fff 1px 3px,#c4c4c4 3px 4px,#6a6a6a 4px 5px);border-bottom:1px solid #6a6a6a"></div>
<div class="a" style="left:276px;top:734px;width:0;height:0;border:4px solid transparent;border-right:4px solid #404040;border-left:0"></div>
<div class="a" style="left:289px;top:731px;width:444px;height:15px;border:1px solid #a8a8a8;border-radius:2px;background:linear-gradient(#f6f6f6,#ececec 45%,#d6d6d9 55%,#e2e2e5)"></div>
<div class="a" style="left:507px;top:735px;width:8px;height:6px;background:repeating-linear-gradient(90deg,#666 0 1px,transparent 1px 3px)"></div>
<div class="a" style="left:1247px;top:734px;width:0;height:0;border:4px solid transparent;border-left:4px solid #404040;border-right:0"></div>
<div class="a" style="left:1258px;top:730px;width:3px;height:17px;background:#000"></div>
<!-- ===== status bar ===== -->
<div class="a" style="left:0;top:748px;width:1280px;height:22px;background:linear-gradient(#f5f5f5,#ececec)"></div>
<span class="t" style="left:10px;top:754px;font-size:12px;letter-spacing:-0.2px">Tabelle 1 / 3</span>
<span class="t" style="left:331px;top:754px;font-size:12px;letter-spacing:-0.2px">Standard</span>
<span class="t" style="left:693px;top:754px;font-size:12px;letter-spacing:-1px">STD</span>
<span class="t" style="left:897px;top:754px;font-size:12px">Summe=0</span>
<span class="t" style="left:1241px;top:754px;font-size:12px;letter-spacing:-0.4px">100%</span>
<div class="a" style="left:325px;top:751px;width:1px;height:17px;background:#a5a5a5"></div>
<div class="a" style="left:634px;top:751px;width:1px;height:17px;background:#a5a5a5"></div>
<div class="a" style="left:688px;top:751px;width:1px;height:17px;background:#a5a5a5"></div>
<div class="a" style="left:722px;top:751px;width:1px;height:17px;background:#a5a5a5"></div>
<div class="a" style="left:738px;top:751px;width:1px;height:17px;background:#a5a5a5"></div>
<div class="a" style="left:767px;top:751px;width:1px;height:17px;background:#a5a5a5"></div>
<div class="a" style="left:1084px;top:751px;width:1px;height:17px;background:#a5a5a5"></div>
<div class="a" style="left:1237px;top:751px;width:1px;height:17px;background:#a5a5a5"></div>
<div class="a" style="left:1107px;top:760px;width:107px;height:1px;background:#8a8a8a"></div>
<div class="a" style="left:1158px;top:756px;width:1px;height:4px;background:#555"></div>
<svg class="a" style="left:1089px;top:754px" width="142" height="13" viewBox="0 0 142 13">
  <circle cx="6.500" cy="6.500" r="5" fill="#cfe3f7" stroke="#4d6f93"/><path d="M3.500 6.500h6" stroke="#1d4f8a" stroke-width="1.600"/>
  <circle cx="134.500" cy="6.500" r="5" fill="#cfe3f7" stroke="#4d6f93"/><path d="M131.500 6.500h6M134.500 3.500v6" stroke="#1d4f8a" stroke-width="1.600"/>
  <circle cx="69.500" cy="7" r="3.600" fill="#6f9bc6" stroke="#3b5d80"/>
</svg>
<!-- ===== below the window ===== -->
<div class="a" style="left:0;top:770px;width:1280px;height:3px;background:linear-gradient(#c4c6c4,#7d867d 40%,#4a5a4a)"></div>
<div class="a" style="left:0;top:773px;width:1280px;height:24px;background:#fff"></div>
<div class="a" style="left:0;top:772px;width:3px;height:25px;background:#2f4a2f"></div>
<div class="a" style="left:12px;top:765px;width:35px;height:14px;border-radius:50%/100% 100% 0 0;background:radial-gradient(ellipse at 50% 100%,#dff3ff,#8bb6d8 70%,#1b2a3a);clip-path:inset(0 0 7px 0)"></div>
<div class="a" style="left:0;top:797px;width:1280px;height:3px;background:#0a0f0a"></div>
<div class="a" style="left:15px;top:797px;width:31px;height:3px;background:linear-gradient(90deg,#0a1a2a,#1fa4dc 25%,#22b4ec 50%,#1fa4dc 75%,#0a1a2a)"></div>
<!-- ===== dialog "Anpassen" ===== -->
<style>
#dlg{left:391px;top:114px;width:544px;height:588px;border-radius:7px 7px 6px 6px;background:#2c4f1d;box-shadow:0 1px 4px 1px rgba(0,0,0,.75),0 7px 15px 4px rgba(0,0,0,.5),0 2px 10px 3px rgba(0,0,0,.3)}
#dlgf{left:1px;top:1px;width:542px;height:586px;border-radius:6px 6px 5px 5px;border:1px solid #e9fbe0;border-right-color:#46cdee;border-bottom-color:#46cdee;
 background:linear-gradient(180deg,rgba(255,255,255,0) 0,rgba(255,255,255,0) 26px,rgba(255,255,255,.58) 27px,rgba(255,255,255,.58) 162px,rgba(255,255,255,0) 164px),
 linear-gradient(90deg,#bcf6a6 0,#b0f394 80px,#7fe652 215px,#80e755 270px,#a6f08a 400px,#b6f4a0 480px,#b2f39a 542px) 0 0/100% 27px no-repeat,
 #80e258}
#dlgf:after{content:"";position:absolute;left:5px;top:25px;width:530px;height:555px;background:transparent}
#cli{left:7px;top:27px;width:530px;height:554px;background:#f0f0f0;border:1px solid #3d6b2c;box-shadow:inset 0 0 0 1px #fff}
.tab{position:absolute;top:149px;height:21px;border:1px solid #8e8f8f;border-bottom:0;background:linear-gradient(#f4f4f4,#ececec 50%,#dedede 51%,#d2d2d2)}
.btn{position:absolute;height:24px;border:1px solid #7d7d7d;border-radius:3px;background:linear-gradient(#f3f3f3,#ececec 48%,#dedede 52%,#d0d0d0);box-shadow:inset 0 0 0 1px #fbfbfb;text-align:center;line-height:23px;font-size:12.1px;white-space:nowrap}
.lbl{position:absolute;white-space:nowrap;line-height:14px;font-size:12.1px}
</style>
<div id="dlg" class="a"><div id="dlgf" class="a"></div><div id="cli" class="a"></div></div>
<span class="t" style="left:399px;top:121px;font-size:12.1px;letter-spacing:-0.4px;text-shadow:0 0 5px #fff,0 0 8px #fff">Anpassen</span>
<!-- close button -->
<div class="a" style="left:886px;top:114px;width:42px;height:18px;border:1px solid #5a2a1a;border-top:0;border-radius:0 0 4px 4px;background:linear-gradient(#e5a78f,#d4785a 45%,#c2431c 50%,#d26a38 85%,#e39a60);box-shadow:inset 0 0 0 1px rgba(255,255,255,.45)"></div>
<svg class="a" style="left:901px;top:118px" width="12" height="10" viewBox="0 0 12 10"><path d="M2 1.500l8 7M10 1.500l-8 7" stroke="#4a1a10" stroke-width="3.600" stroke-linecap="square"/><path d="M2 1.500l8 7M10 1.500l-8 7" stroke="#fff" stroke-width="2.500" stroke-linecap="square"/></svg>
<!-- tab page -->
<div class="a" style="left:404px;top:169px;width:516px;height:489px;background:#fff;border:1px solid #8e8f8f"></div>
<div class="tab" style="left:450px;width:51px"></div>
<div class="tab" style="left:500px;width:85px"></div>
<div class="tab" style="left:584px;width:62px"></div>
<div class="a" style="left:404px;top:147px;width:47px;height:24px;background:#fff;border:1px solid #8e8f8f;border-bottom:0"></div>
<span class="lbl" style="left:407px;top:152px;font-weight:bold;letter-spacing:-0.2px">Menüs</span>
<span class="lbl" style="left:453px;top:153px;letter-spacing:-0.1px">Tastatur</span>
<span class="lbl" style="left:505px;top:153px;letter-spacing:-0.1px">Symbolleisten</span>
<span class="lbl" style="left:588px;top:153px;letter-spacing:-0.45px">Ereignisse</span>
<!-- group 1 -->
<span class="lbl" style="left:418px;top:194px;letter-spacing:-0.08px">OpenOffice.org Calc Menüs</span>
<div class="a" style="left:569px;top:200px;width:338px;height:1px;background:#a0a0a0"></div>
<span class="lbl" style="left:424px;top:219px"><u>M</u>enü</span>
<div class="a" style="left:527px;top:213px;width:203px;height:22px;background:#fff;border:1px solid #98a0a8"></div>
<div class="a" style="left:529px;top:215px;width:182px;height:19px;background:#3399ff;box-shadow:inset 0 0 0 1px #000;outline:1px dotted #fff;outline-offset:-1px"></div>
<div class="a" style="left:711px;top:215px;width:17px;height:19px;border:1px solid #3c7fb1;background:linear-gradient(#e4f3fc,#c4e5f6 48%,#98d1ef 52%,#68b3db)"></div>
<div class="dd" style="left:716px;top:223px;border-width:4px 4px 0 4px"></div>
<div class="a" style="left:527px;top:235px;width:203px;height:34px;background:#fff;border:1px solid #000"></div>
<div class="btn" style="left:768px;top:214px;width:139px"><u>N</u>eu...</div>
<div class="btn" style="left:768px;top:246px;width:139px;padding-right:14px">Menü</div>
<div class="a" style="left:886px;top:250px;width:2px;height:16px;background:linear-gradient(90deg,#9c9c9c 50%,#f6f6f6 50%)"></div>
<div class="dd" style="left:891px;top:256px;border-width:4px 4px 0 4px"></div>
<!-- group 2 -->
<span class="lbl" style="left:418px;top:278px">Menüinhalt</span>
<div class="a" style="left:483px;top:284px;width:424px;height:1px;background:#a0a0a0"></div>
<span class="lbl" style="left:424px;top:299px;letter-spacing:-0.3px"><u>E</u>inträge</span>
<div class="a" style="left:527px;top:298px;width:203px;height:221px;background:#fff;border:1px solid #80858f"></div>
<div class="btn" style="left:768px;top:299px;width:139px">Hinz<u>u</u>fügen...</div>
<div class="btn" style="left:768px;top:331px;width:139px;padding-right:14px">Ändern</div>
<div class="a" style="left:886px;top:335px;width:2px;height:16px;background:linear-gradient(90deg,#9c9c9c 50%,#f6f6f6 50%)"></div>
<div class="dd" style="left:891px;top:341px;border-width:4px 4px 0 4px"></div>
<!-- move buttons -->
<div class="a" style="left:736px;top:364px;width:24px;height:24px;border:1px solid #a9a9a9;border-radius:3px;background:#f2f2f2;box-shadow:inset 0 0 0 1px #fafafa"></div>
<svg class="a" style="left:738px;top:366px" width="20" height="20" viewBox="0 0 16 16"><path d="M8 .8l7.200 7h-4.200v6.800h-6v-6.800h-4.200z" fill="#9a9a9a" stroke="#8a8a8a" stroke-width=".6"/></svg>
<div class="a" style="left:736px;top:396px;width:24px;height:24px;border:1px solid #a9a9a9;border-radius:3px;background:#f2f2f2;box-shadow:inset 0 0 0 1px #fafafa"></div>
<svg class="a" style="left:738px;top:398px" width="20" height="20" viewBox="0 0 16 16"><path d="M8 15.200l7.200-7h-4.200v-6.800h-6v6.800h-4.200z" fill="#9a9a9a" stroke="#8a8a8a" stroke-width=".6"/></svg>
<!-- save in -->
<span class="lbl" style="left:424px;top:529px;letter-spacing:-0.2px"><u>S</u>peichern in</span>
<div class="a" style="left:527px;top:525px;width:203px;height:23px;background:#fff;border:1px solid #8e8e8e"></div>
<span class="lbl" style="left:530px;top:530px;letter-spacing:-0.12px">OpenOffice.org Calc</span>
<div class="cbtn" style="left:711px;top:527px"></div>
<span class="lbl" style="left:418px;top:557px;letter-spacing:-0.2px"><u>B</u>eschreibung</span>
<div class="a" style="left:418px;top:577px;width:487px;height:66px;background:#f0f0f0;border:1px solid #a5a5a5"></div>
<!-- bottom buttons -->
<div class="btn" style="left:604px;top:665px;width:74px;height:23px;line-height:22px;border-color:#3c8fc8;box-shadow:inset 0 0 0 1px #6fd6f6,inset 0 0 0 2px #c8eefa">OK</div>
<div class="btn" style="left:685px;top:665px;width:74px;height:23px;line-height:22px;letter-spacing:-0.1px">Abbrechen</div>
<div class="btn" style="left:766px;top:665px;width:74px;height:23px;line-height:22px"><u>H</u>ilfe</div>
<div class="btn" style="left:847px;top:665px;width:74px;height:23px;line-height:22px"><u>Z</u>urück</div>
</body>
</html>
